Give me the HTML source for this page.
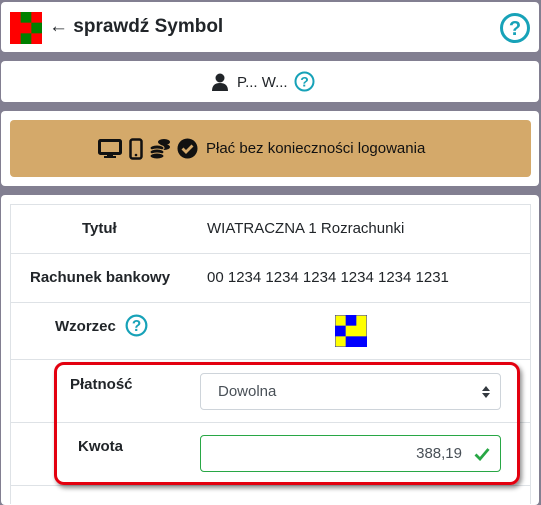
<!DOCTYPE html>
<html><head><meta charset="utf-8"><style>
*{box-sizing:border-box;margin:0;padding:0}
body{width:541px;height:493px;background:#827f91;font-family:"Liberation Sans",sans-serif;color:#212529;position:relative;overflow:hidden}
.card{position:absolute;left:1px;width:538px;background:#fff;border-radius:4px}
.abs{position:absolute}
.row{position:absolute;left:10px;width:503px;border-top:1px solid #dee2e6}
.lbl{position:absolute;font-weight:bold;font-size:15px}
.val{position:absolute;font-size:15px}
</style></head><body>
<div class="card" style="top:2px;height:50px">
  <svg class="abs" style="left:9px;top:10px" width="32" height="32" viewBox="0 0 3 3"><rect width="3" height="3" fill="#f00"/><rect x="1" y="0" width="1" height="1" fill="#008000"/><rect x="2" y="1" width="1" height="1" fill="#008000"/><rect x="1" y="2" width="1" height="1" fill="#008000"/></svg>
  <div class="abs" style="left:48px;top:14px;font-size:19px;font-weight:bold">← sprawdź Symbol</div>
  <svg class="abs" style="left:498px;top:10px" width="32" height="32" viewBox="0 0 32 32"><circle cx="16" cy="16" r="13.5" fill="none" stroke="#17a2b8" stroke-width="3"/><text x="16" y="23" text-anchor="middle" font-family="Liberation Sans" font-weight="bold" font-size="20" fill="#17a2b8">?</text></svg>
</div>
<div class="card" style="top:61px;height:41px">
  <svg class="abs" style="left:210px;top:12px" width="18" height="18" viewBox="0 0 18 18"><circle cx="9" cy="5" r="4.5" fill="#212529"/><path d="M1 18 Q1 10 9 10 Q17 10 17 18Z" fill="#212529"/></svg>
  <div class="abs" style="left:236px;top:13px;font-size:15px">P... W...</div>
  <svg class="abs" style="left:293px;top:10px" width="21" height="21" viewBox="0 0 21 21"><circle cx="10.5" cy="10.5" r="9" fill="none" stroke="#17a2b8" stroke-width="2"/><text x="10.5" y="15.5" text-anchor="middle" font-family="Liberation Sans" font-weight="bold" font-size="14" fill="#17a2b8">?</text></svg>
</div>
<div class="card" style="top:111px;height:75px">
  <div class="abs" style="left:9px;top:9px;width:521px;height:57px;background:#d4a96a;border-radius:4px">
    <svg class="abs" style="left:88px;top:19px" width="24" height="20" viewBox="0 0 24 20"><rect x="1.5" y="1.5" width="21" height="13" fill="none" stroke="#111" stroke-width="3" rx="1"/><rect x="9" y="15" width="6" height="3" fill="#111"/><rect x="6" y="17" width="12" height="2" fill="#111"/></svg>
    <svg class="abs" style="left:119px;top:18px" width="14" height="22" viewBox="0 0 14 22"><rect x="1.5" y="1.5" width="11" height="19" rx="2" fill="none" stroke="#111" stroke-width="2.5"/><circle cx="7" cy="17" r="1.3" fill="#111"/></svg>
    <svg class="abs" style="left:139px;top:18px" width="22" height="22" viewBox="0 0 22 22"><ellipse cx="15" cy="4" rx="6" ry="3" fill="#111"/><ellipse cx="15" cy="9" rx="6" ry="3" fill="#111"/><ellipse cx="8" cy="10" rx="7" ry="3" fill="#111" stroke="#d4a96a"/><ellipse cx="8" cy="14" rx="7" ry="3" fill="#111" stroke="#d4a96a"/><ellipse cx="8" cy="18" rx="7" ry="3" fill="#111" stroke="#d4a96a"/></svg>
    <svg class="abs" style="left:167px;top:18px" width="21" height="21" viewBox="0 0 21 21"><circle cx="10.5" cy="10.5" r="10" fill="#111"/><path d="M5.5 10.5 L9 14 L15.5 7.5" fill="none" stroke="#d4a96a" stroke-width="2.8"/></svg>
    <div class="abs" style="left:196px;top:20px;font-size:15px;color:#111">Płać bez konieczności logowania</div>
  </div>
</div>
<div class="card" style="top:195px;height:310px">
  <div class="abs" style="left:9px;top:9px;width:521px;height:300px;border:1px solid #dee2e6;border-bottom:none"></div>
</div>
<div class="row" style="top:253px;left:10px;width:521px"></div>
<div class="row" style="top:302px;left:10px;width:521px"></div>
<div class="row" style="top:359px;left:10px;width:521px"></div>
<div class="row" style="top:422px;left:10px;width:521px"></div>
<div class="row" style="top:485px;left:10px;width:521px"></div>
<div class="lbl" style="left:82px;top:220px">Tytuł</div>
<div class="val" style="left:207px;top:220px">WIATRACZNA 1 Rozrachunki</div>
<div class="lbl" style="left:30px;top:269px">Rachunek bankowy</div>
<div class="val" style="left:207px;top:269px">00 1234 1234 1234 1234 1234 1231</div>
<div class="lbl" style="left:55px;top:318px">Wzorzec</div>
<svg class="abs" style="left:125px;top:314px" width="23" height="23" viewBox="0 0 21 21"><circle cx="10.5" cy="10.5" r="9" fill="none" stroke="#17a2b8" stroke-width="2"/><text x="10.5" y="15.5" text-anchor="middle" font-family="Liberation Sans" font-weight="bold" font-size="14" fill="#17a2b8">?</text></svg>
<svg class="abs" style="left:335px;top:315px" width="32" height="32" viewBox="0 0 3 3"><rect width="3" height="3" fill="#ff0"/><rect x="1" y="0" width="1" height="1" fill="#00f"/><rect x="0" y="1" width="1" height="1" fill="#00f"/><rect x="1" y="2" width="2" height="1" fill="#00f"/><rect x="0.02" y="0.02" width="2.96" height="2.96" fill="none" stroke="#00f" stroke-width="0.04"/></svg>
<div class="abs" style="left:54px;top:362px;width:466px;height:123px;border:3px solid #e3000f;border-radius:10px;box-shadow:2px 3px 5px rgba(0,0,0,.45)"></div>
<div class="lbl" style="left:70px;top:376px">Płatność</div>
<div class="abs" style="left:200px;top:373px;width:301px;height:37px;border:1px solid #ced4da;border-radius:4px;font-size:15px;color:#495057;padding:9px 0 0 17px">Dowolna
<svg class="abs" style="right:10px;top:12px" width="8" height="12" viewBox="0 0 8 12"><path d="M0 5 L4 0 L8 5Z M0 7 L4 12 L8 7Z" fill="#343a40"/></svg></div>
<div class="lbl" style="left:78px;top:438px">Kwota</div>
<div class="abs" style="left:200px;top:435px;width:301px;height:37px;border:1px solid #28a745;border-radius:4px;font-size:15px;color:#495057;text-align:right;padding:9px 38px 0 0">388,19
<svg class="abs" style="right:10px;top:11px" width="16" height="14" viewBox="0 0 16 14"><path d="M1.5 7.5 L6 12 L14.5 2" fill="none" stroke="#28a745" stroke-width="2.8"/></svg></div>
</body></html>
